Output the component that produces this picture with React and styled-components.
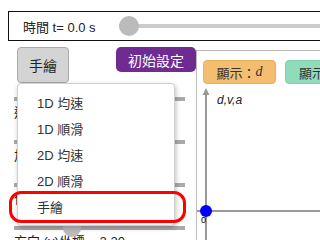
import React from "react";
import styled, { createGlobalStyle } from "styled-components";

const Global = createGlobalStyle`
  html, body { margin: 0; padding: 0; background: #fff; overflow: hidden; }
  body { font-family: "Liberation Sans", "Noto Sans CJK TC", sans-serif; color: #222; }
`;

const Page = styled.div`
  position: relative;
  width: 320px;
  height: 240px;
  overflow: hidden;
  padding: 11px 0 0 8px;
  box-sizing: border-box;
`;

const TopBar = styled.div`
  width: 420px;
  height: 30px;
  box-sizing: border-box;
  border: 1px solid #111;
  display: flex;
  align-items: center;
  padding-left: 14px;
  font-size: 13px;
`;

const TimeLabel = styled.span`
  width: 82px;
  white-space: nowrap;
`;

const TimeSlider = styled.div`
  position: relative;
  flex: 1;
  height: 4px;
  background: #ccc;
  margin-left: 14px;
`;

const Thumb = styled.div`
  position: absolute;
  left: ${(p) => p.$x}px;
  top: 50%;
  width: ${(p) => p.$size}px;
  height: ${(p) => p.$size}px;
  margin: ${(p) => -p.$size / 2}px 0 0 ${(p) => -p.$size / 2}px;
  border-radius: 50%;
  background: #bbb;
`;

const Main = styled.div`
  display: flex;
  margin-top: 6px;
`;

const LeftCol = styled.div`
  width: 188px;
  flex-shrink: 0;
`;

const ButtonRow = styled.div`
  display: flex;
  align-items: flex-start;
  padding-left: 9px;
`;

const GrayButton = styled.div`
  width: 52px;
  height: 36px;
  box-sizing: border-box;
  border: 1px solid #aaa;
  border-radius: 4px;
  background: #d4d4d4;
  display: flex;
  align-items: center;
  justify-content: center;
  font-size: 14px;
`;

const PurpleButton = styled.div`
  margin-left: 47px;
  width: 80px;
  height: 25px;
  border-radius: 5px;
  background: #6f2b92;
  color: #fff;
  display: flex;
  align-items: center;
  justify-content: center;
  font-size: 14px;
`;

const Sliders = styled.div`
  margin-top: 14px;
  padding-left: 6px;
`;

const SliderRow = styled.div`
  height: 43px;
`;

const Track = styled.div`
  position: relative;
  width: 171px;
  height: 4px;
  background: #aaa;
`;

const RowLabel = styled.div`
  margin-top: 4px;
  height: 16px;
  line-height: 16px;
  font-size: 13px;
  white-space: nowrap;
`;

const RightPanel = styled.div`
  flex: 1;
  margin-top: 3px;
  border-left: 1px solid #bbb;
  border-top: 1px solid #bbb;
  height: 200px;
`;

const ShowRow = styled.div`
  display: flex;
  gap: 9px;
  padding: 9px 0 0 6px;
`;

const ShowButton = styled.div`
  flex-shrink: 0;
  width: 73px;
  height: 24px;
  box-sizing: border-box;
  border-radius: 4px;
  border: 1px solid ${(p) => p.$border};
  background: ${(p) => p.$bg};
  display: flex;
  align-items: center;
  justify-content: center;
  font-size: 13px;
  color: #333;
  white-space: nowrap;
  & i { font-family: "Liberation Serif", serif; font-size: 14px; }
`;

const Graph = styled.svg`
  display: block;
`;

const Menu = styled.div`
  position: absolute;
  left: 17px;
  top: 83px;
  width: 158px;
  height: 143px;
  box-sizing: border-box;
  background: #fff;
  border: 1px solid #d0d0d0;
  border-radius: 4px;
  box-shadow: 1px 2px 5px rgba(0, 0, 0, 0.25);
  padding-top: 7px;
`;

const MenuItem = styled.div`
  height: 26px;
  line-height: 26px;
  padding-left: 19px;
  font-size: 13px;
  color: #333;
`;

const Highlight = styled.div`
  position: absolute;
  left: 9px;
  top: 191px;
  width: 177px;
  height: 32px;
  box-sizing: border-box;
  border: 3px solid #ff0000;
  border-radius: 12px;
`;

const labels = ["速度 v = 1.00", "加速度 a = 0.00", "位置 x = 0.00", "方向 (y)坐標 = 2.20"];

export default function App() {
  return (
    <>
      <Global />
      <Page>
        <TopBar>
          <TimeLabel>時間 t= 0.0 s</TimeLabel>
          <TimeSlider>
            <Thumb $x={10} $size={20} />
          </TimeSlider>
        </TopBar>
        <Main>
          <LeftCol>
            <ButtonRow>
              <GrayButton>手繪</GrayButton>
              <PurpleButton>初始設定</PurpleButton>
            </ButtonRow>
            <Sliders>
              {labels.map((l, i) => (
                <SliderRow key={i}>
                  <Track>
                    <Thumb $x={i === 3 ? 58 : 60} $size={18} />
                  </Track>
                  <RowLabel>{l}</RowLabel>
                </SliderRow>
              ))}
            </Sliders>
          </LeftCol>
          <RightPanel>
            <ShowRow>
              <ShowButton $bg="#f4bd6f" $border="#e8b060">
                顯示：<i>d</i>
              </ShowButton>
              <ShowButton $bg="#8fdcbb" $border="#80d0ad">
                顯示：<i>v</i>
              </ShowButton>
            </ShowRow>
            <Graph width="124" height="160" viewBox="0 0 124 160">
              <line x1="9" y1="8" x2="9" y2="160" stroke="#999" strokeWidth="2" />
              <path d="M9 4 L5.5 11 L12.5 11 Z" fill="#999" />
              <line x1="0" y1="127" x2="124" y2="127" stroke="#999" strokeWidth="2" />
              <text x="20" y="20" fontSize="12" fontStyle="italic" fontFamily="Liberation Sans, sans-serif" fill="#222">
                d,v,a
              </text>
              <text x="4" y="139" fontSize="9" fontFamily="Liberation Sans, sans-serif" fill="#000">
                0
              </text>
              <circle cx="9" cy="127" r="6" fill="#0000ff" />
            </Graph>
          </RightPanel>
        </Main>
        <Menu>
          <MenuItem>1D 均速</MenuItem>
          <MenuItem>1D 順滑</MenuItem>
          <MenuItem>2D 均速</MenuItem>
          <MenuItem>2D 順滑</MenuItem>
          <MenuItem>手繪</MenuItem>
        </Menu>
        <Highlight />
      </Page>
    </>
  );
}
